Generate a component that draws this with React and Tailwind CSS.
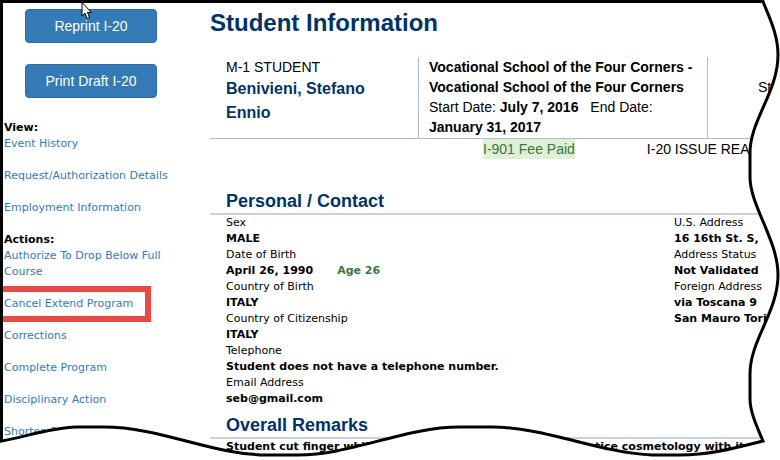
import clsx from 'clsx'

const viewLinks = ['Event History', 'Request/Authorization Details', 'Employment Information']

const actionLinks = [
    { label: 'Authorize To Drop Below Full Course' },
    { label: 'Cancel Extend Program', marked: true },
    { label: 'Corrections' },
    { label: 'Complete Program' },
    { label: 'Disciplinary Action' },
    { label: 'Shorten Program' },
]

const personal = [
    { label: 'Sex', value: 'MALE' },
    { label: 'Date of Birth', value: 'April 26, 1990', note: 'Age 26' },
    { label: 'Country of Birth', value: 'ITALY' },
    { label: 'Country of Citizenship', value: 'ITALY' },
    { label: 'Telephone', value: 'Student does not have a telephone number.' },
    { label: 'Email Address', value: 'seb@gmail.com' },
]

const addresses = [
    { label: 'U.S. Address', value: '16 16th St. S,' },
    { label: 'Address Status', value: 'Not Validated' },
    { label: 'Foreign Address', value: 'via Toscana 9' },
]

function ActionButton({ children }) {
    return (
        <button type="button" className="h-[34px] w-[132px] rounded border border-[#2e6da4] bg-[#337ab7] font-['Liberation_Sans',sans-serif] text-sm leading-5 text-white">
            {children}
        </button>
    )
}

function SideLink({ label, marked }) {
    return (
        <li className={clsx(marked ? '-mt-2.5 mb-1.5 -ml-1 w-fit border-y-6 border-r-6 border-[#ea4a45] pt-1 pr-3 pb-1 pl-1' : 'mb-4')}>
            <a href="#" className="block text-[#337ab7]">{label}</a>
        </li>
    )
}

function Details({ items }) {
    return (
        <dl>
            {items.map(({ label, value, note }) => (
                <div key={label}>
                    <dt>{label}</dt>
                    <dd className="font-bold">
                        {value}
                        {note && <span className="ml-6 text-[#3c763d]">{note}</span>}
                    </dd>
                </div>
            ))}
        </dl>
    )
}

function SectionTitle({ children }) {
    return (
        <h2 className="border-b-2 border-[#c6d3e2] pl-4 font-['Liberation_Sans',sans-serif] text-lg leading-6 font-bold text-[#003366]">
            {children}
        </h2>
    )
}

// torn paper frame that runs over the content
function TornFrame() {
    const edge = 'M1.5 1.5H763C769 17 778 34 778 55C778 92 750 120 750 153V177C750 206 778 240 778 275C778 312 750 340 750 374V399C750 412 757 427 763 441C735 448 710 455 680 455H652C600 453 545 427 492 427H459C406 427 350 455 298 455H267C213 455 160 427 104 427H76C49 428 25 437 1.5 441Z'
    return (
        <svg className="pointer-events-none absolute inset-0 h-full w-full" viewBox="0 0 780 460" preserveAspectRatio="none" aria-hidden="true">
            <path d={`M0 0H780V460H0Z${edge}`} fill="#fff" fillRule="evenodd" />
            <path d={edge} fill="none" stroke="#000" strokeWidth="3" />
        </svg>
    )
}

function Cursor() {
    return (
        <svg className="pointer-events-none absolute top-0.5 left-[81px] h-[18px] w-3" viewBox="0 0 12 18" aria-hidden="true">
            <path d="M1 .5V14L4 11.2L6.2 16.5L8.6 15.5L6.4 10.4H10.4Z" fill="#fff" stroke="#000" />
        </svg>
    )
}

export default function App() {
    return (
        <div className="relative flex min-h-screen overflow-hidden bg-white pt-[9px] font-['DejaVu_Sans',sans-serif] text-[11px] leading-4 text-black">
            <aside className="w-[210px] shrink-0 pr-8 pl-1">
                <div className="flex flex-col gap-[21px] pl-[21px]">
                    <ActionButton>Reprint I-20</ActionButton>
                    <ActionButton>Print Draft I-20</ActionButton>
                </div>
                <nav className="mt-[22px]">
                    <h2 className="font-bold">View:</h2>
                    <ul>
                        {viewLinks.map((label) => <SideLink key={label} label={label} />)}
                    </ul>
                    <h2 className="font-bold">Actions:</h2>
                    <ul>
                        {actionLinks.map((link) => <SideLink key={link.label} {...link} />)}
                    </ul>
                </nav>
            </aside>

            <main className="min-w-0 flex-1">
                <div className="font-['Liberation_Sans',sans-serif] text-sm leading-5">
                    <h1 className="text-2xl leading-7 font-bold text-[#003366]">Student Information</h1>
                    <div className="mt-5 flex border-b border-[#a9bdd3]">
                        <div className="w-[209px] shrink-0 border-r border-[#a9bdd3] pr-10 pl-4">
                            <p>M-1 STUDENT</p>
                            <p className="text-base leading-6 font-bold text-[#003366]">Benivieni, Stefano Ennio</p>
                        </div>
                        <div className="w-[289px] shrink-0 border-r border-[#a9bdd3] pb-px pl-2.5">
                            <p className="font-bold">Vocational School of the Four Corners - Vocational School of the Four Corners</p>
                            <p>Start Date: <b>July 7, 2016</b> <span className="ml-2">End Date:</span> <b className="block">January 31, 2017</b></p>
                        </div>
                        <p className="pt-5 pl-[50px]">Status</p>
                    </div>
                    <div className="flex gap-[72px] pl-[273px] whitespace-nowrap">
                        <span className="bg-[#dff0d8] text-[#3c763d]">I-901 Fee Paid</span>
                        <span>I-20 ISSUE REASON</span>
                    </div>
                </div>

                <section className="mt-[30px]">
                    <SectionTitle>Personal / Contact</SectionTitle>
                    <div className="flex pl-4 whitespace-nowrap">
                        <div className="w-[448px] shrink-0">
                            <Details items={personal} />
                        </div>
                        <div>
                            <Details items={addresses} />
                            <p className="font-bold">San Mauro Torinese</p>
                        </div>
                    </div>
                </section>

                <section className="mt-1.5">
                    <SectionTitle>Overall Remarks</SectionTitle>
                    <p className="pl-4 font-bold whitespace-nowrap">Student cut finger while working and could not legally practice cosmetology with it</p>
                </section>
            </main>

            <TornFrame />
            <Cursor />
        </div>
    )
}
